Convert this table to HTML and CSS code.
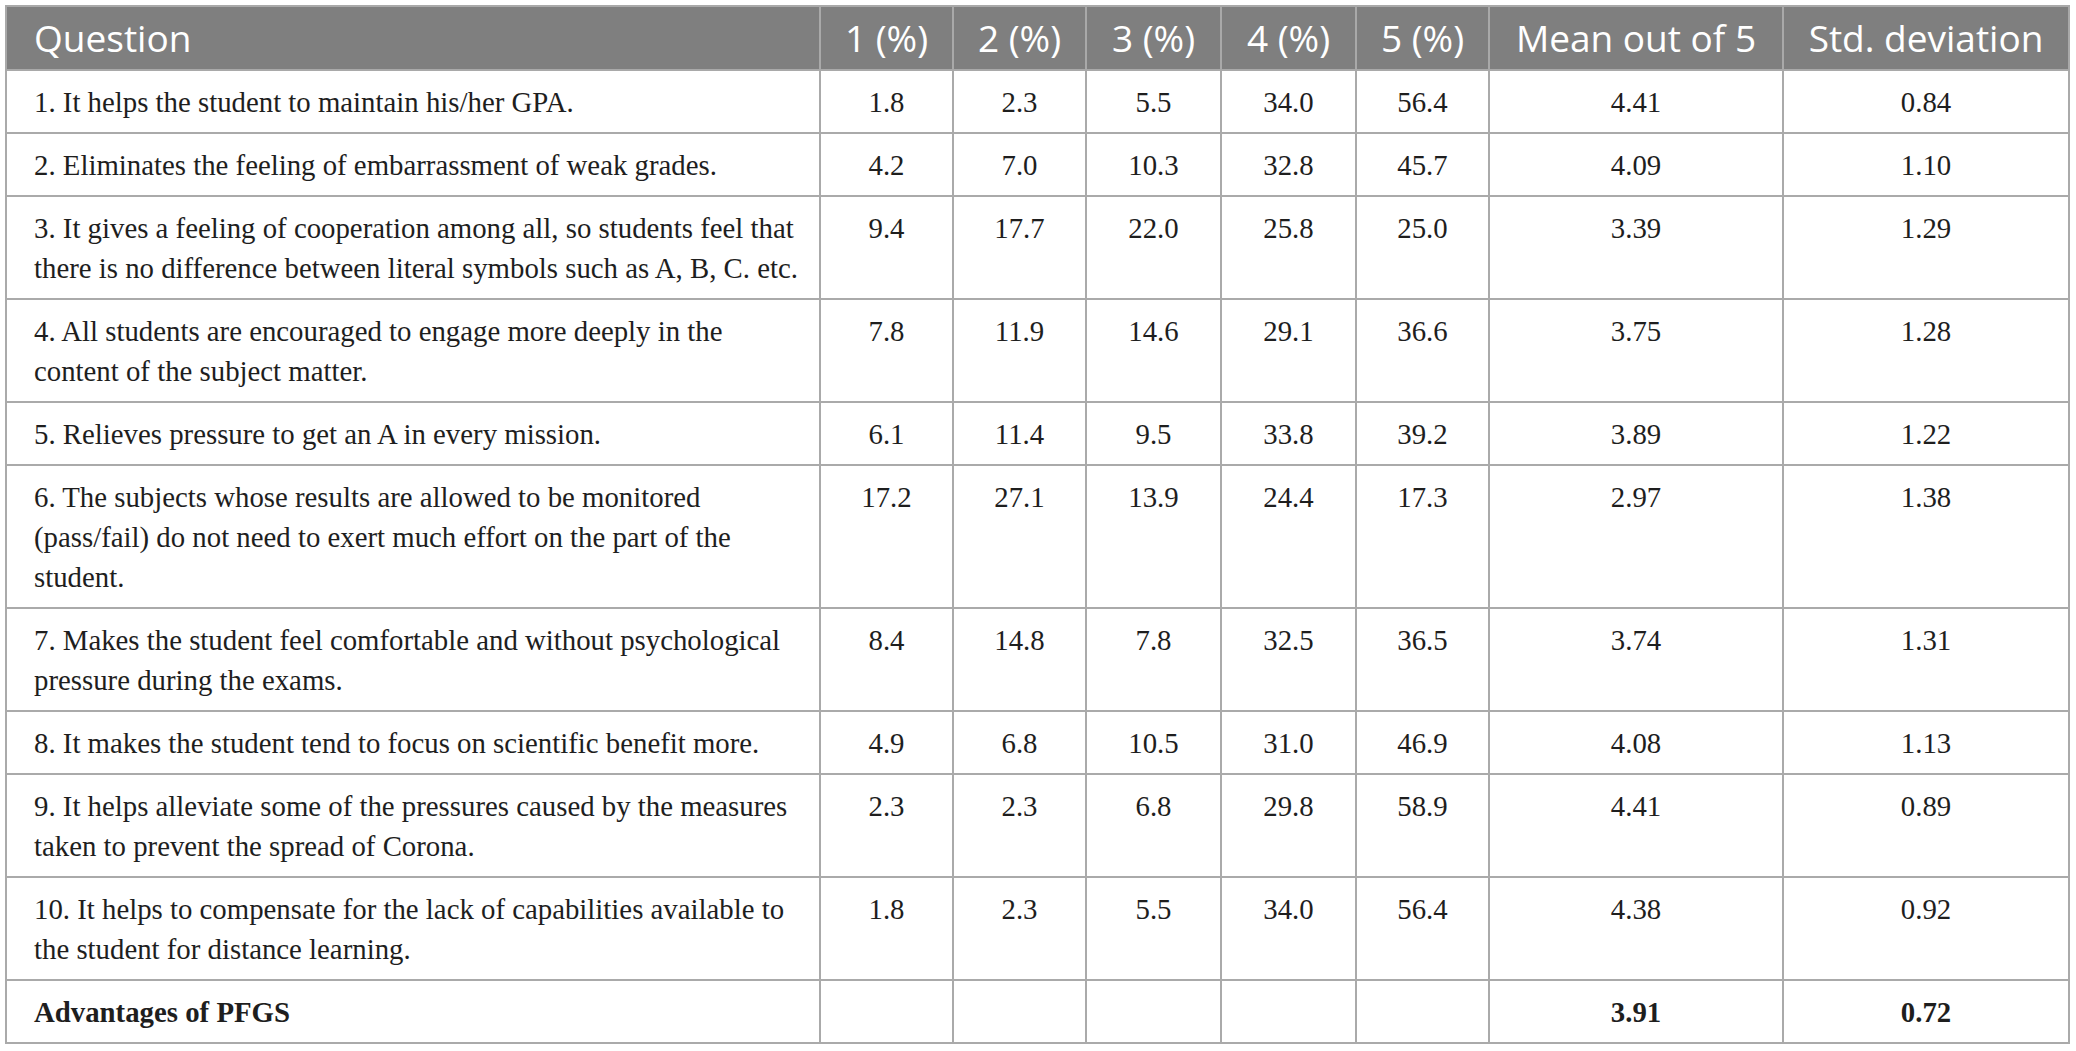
FILE: index.html
```html
<!DOCTYPE html>
<html lang="en">
<head>
    <meta charset="UTF-8">
    <title>Advantages of PFGS</title>
    <link rel="stylesheet" href="styles.css">
</head>
<body>
    <table class="survey">
        <colgroup>
            <col class="col-q">
            <col class="col-pct">
            <col class="col-pct">
            <col class="col-pct3">
            <col class="col-pct3">
            <col class="col-pct">
            <col class="col-mean">
            <col class="col-sd">
        </colgroup>
        <thead>
            <tr>
                <th class="q">Question</th>
                <th>1 (%)</th>
                <th>2 (%)</th>
                <th>3 (%)</th>
                <th>4 (%)</th>
                <th>5 (%)</th>
                <th>Mean out of 5</th>
                <th>Std. deviation</th>
            </tr>
        </thead>
        <tbody>
            <tr>
                <td class="q">1. It helps the student to maintain his/her GPA.</td>
                <td>1.8</td><td>2.3</td><td>5.5</td><td>34.0</td><td>56.4</td><td>4.41</td><td>0.84</td>
            </tr>
            <tr>
                <td class="q">2. Eliminates the feeling of embarrassment of weak grades.</td>
                <td>4.2</td><td>7.0</td><td>10.3</td><td>32.8</td><td>45.7</td><td>4.09</td><td>1.10</td>
            </tr>
            <tr>
                <td class="q">3. It gives a feeling of cooperation among all, so students feel that<br>there is no difference between literal symbols such as A, B, C. etc.</td>
                <td>9.4</td><td>17.7</td><td>22.0</td><td>25.8</td><td>25.0</td><td>3.39</td><td>1.29</td>
            </tr>
            <tr>
                <td class="q">4. All students are encouraged to engage more deeply in the<br>content of the subject matter.</td>
                <td>7.8</td><td>11.9</td><td>14.6</td><td>29.1</td><td>36.6</td><td>3.75</td><td>1.28</td>
            </tr>
            <tr>
                <td class="q">5. Relieves pressure to get an A in every mission.</td>
                <td>6.1</td><td>11.4</td><td>9.5</td><td>33.8</td><td>39.2</td><td>3.89</td><td>1.22</td>
            </tr>
            <tr>
                <td class="q">6. The subjects whose results are allowed to be monitored<br>(pass/fail) do not need to exert much effort on the part of the<br>student.</td>
                <td>17.2</td><td>27.1</td><td>13.9</td><td>24.4</td><td>17.3</td><td>2.97</td><td>1.38</td>
            </tr>
            <tr>
                <td class="q">7. Makes the student feel comfortable and without psychological<br>pressure during the exams.</td>
                <td>8.4</td><td>14.8</td><td>7.8</td><td>32.5</td><td>36.5</td><td>3.74</td><td>1.31</td>
            </tr>
            <tr>
                <td class="q">8. It makes the student tend to focus on scientific benefit more.</td>
                <td>4.9</td><td>6.8</td><td>10.5</td><td>31.0</td><td>46.9</td><td>4.08</td><td>1.13</td>
            </tr>
            <tr>
                <td class="q">9. It helps alleviate some of the pressures caused by the measures<br>taken to prevent the spread of Corona.</td>
                <td>2.3</td><td>2.3</td><td>6.8</td><td>29.8</td><td>58.9</td><td>4.41</td><td>0.89</td>
            </tr>
            <tr>
                <td class="q">10. It helps to compensate for the lack of capabilities available to<br>the student for distance learning.</td>
                <td>1.8</td><td>2.3</td><td>5.5</td><td>34.0</td><td>56.4</td><td>4.38</td><td>0.92</td>
            </tr>
            <tr class="total">
                <td class="q">Advantages of PFGS</td>
                <td></td><td></td><td></td><td></td><td></td><td>3.91</td><td>0.72</td>
            </tr>
        </tbody>
    </table>
</body>
</html>
```

FILE: styles.css
```css
body {
    margin: 0;
    background-color: #ffffff;
}
.survey {
    margin: 5px 0 0 5px;
    border-collapse: collapse;
    table-layout: fixed;
    width: 2064px;
    border: 2px solid #aaaaaa;
    font-family: "Liberation Serif", "Times New Roman", serif;
    color: #1e1e1e;
}
.col-q {
    width: 814px;
}
.col-pct {
    width: 133px;
}
.col-pct3 {
    width: 135px;
}
.col-mean {
    width: 294px;
}
.col-sd {
    width: 286px;
}
th {
    background-color: #7f7f7f;
    color: #ffffff;
    font-family: "Open Sans", sans-serif;
    font-weight: 400;
    font-size: 37px;
    line-height: 44px;
    padding: 9px 10px 9px;
    text-align: center;
    border: 2px solid #a9a9a9;
    white-space: nowrap;
}
td {
    font-size: 28.8px;
    line-height: 40px;
    padding: 11px 10px 10px;
    text-align: center;
    vertical-align: top;
    border: 2px solid #aaaaaa;
}
th.q,
td.q {
    text-align: left;
    padding-left: 27px;
}
.total td {
    font-weight: bold;
}
```
